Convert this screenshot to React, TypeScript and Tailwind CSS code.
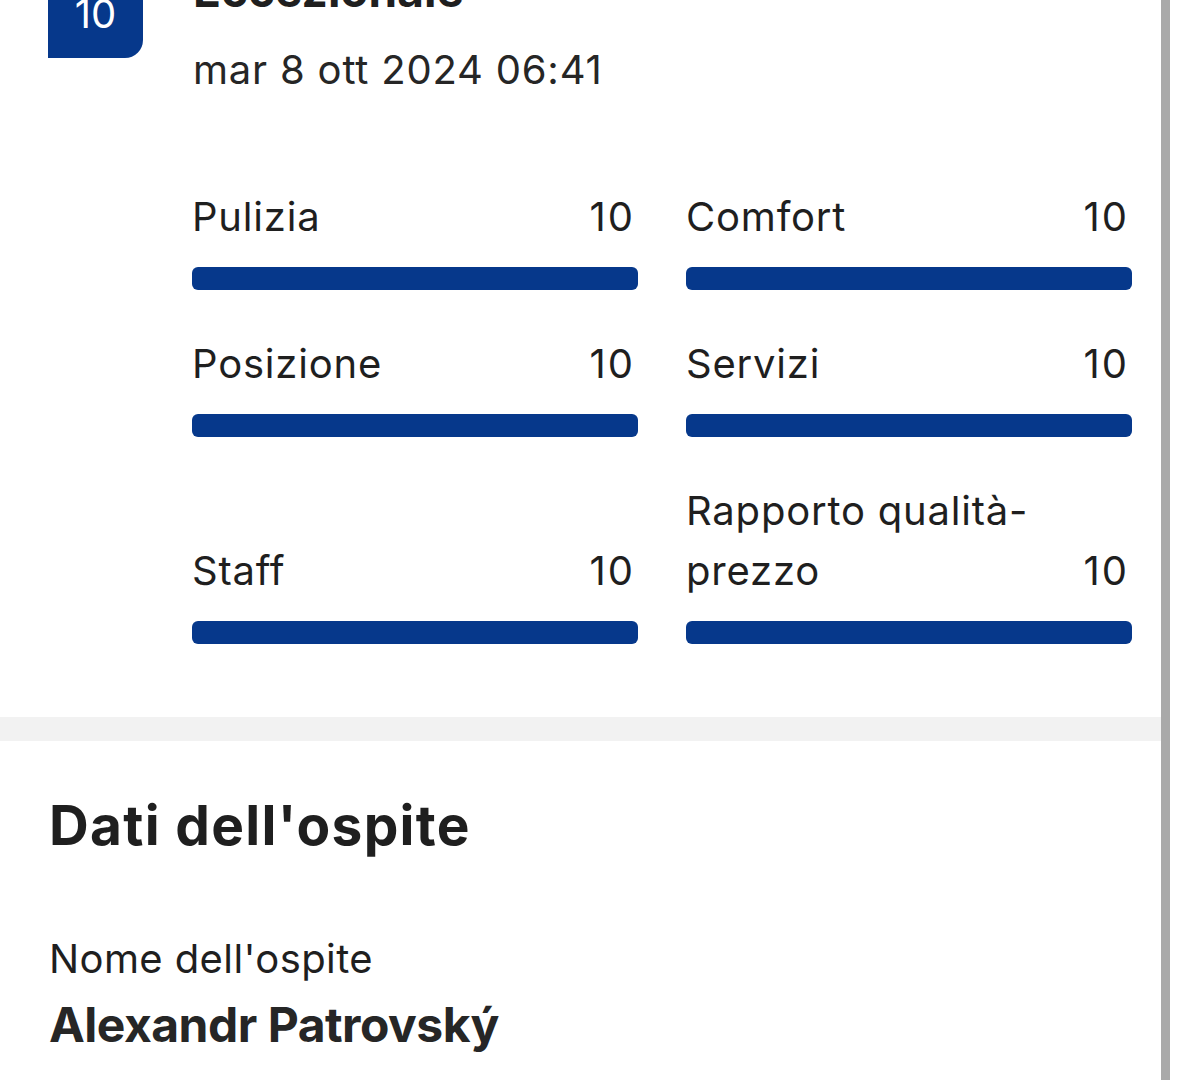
import React from "react";

const scores: { label: string; value: string }[] = [
  { label: "Pulizia", value: "10" },
  { label: "Comfort", value: "10" },
  { label: "Posizione", value: "10" },
  { label: "Servizi", value: "10" },
  { label: "Staff", value: "10" },
  { label: "Rapporto qualità-prezzo", value: "10" },
];

function ScoreItem({ label, value }: { label: string; value: string }) {
  return (
    <div className="flex flex-col justify-end">
      <div className="flex items-end justify-between gap-4 text-[40px] leading-[60px] tracking-[0.8px] text-[#1f1f1f]">
        <span className="min-w-0">{label}</span>
        <span className="shrink-0 mr-[3px] tracking-[2px]">{value}</span>
      </div>
      <div className="mt-[20px] h-[23px] w-full rounded-[6px] bg-[#06388b]" />
    </div>
  );
}

export default function App() {
  return (
    <div
      className="flex h-[1080px] w-[1179px] overflow-hidden bg-white [font-variant-ligatures:none]"
      style={{ fontFamily: "Inter, 'Noto Sans', 'Liberation Sans', sans-serif" }}
    >
      <div className="flex min-w-0 flex-1 flex-col">
        {/* Review header */}
        <div className="-mt-[40px] flex items-start pl-[48px]">
          <div className="mt-[3px] flex h-[95px] w-[95px] shrink-0 items-center justify-center rounded-t-[18px] rounded-br-[18px] bg-[#06388b] pt-[6px] text-[40px] leading-none text-white">
            10
          </div>
          <div className="ml-[50px] flex flex-col">
            <div className="text-[46px] font-bold leading-[60px] text-[#1f1f1f]">Eccezionale</div>
            <div className="mt-[20px] text-[40px] leading-[60px] tracking-[0.8px] text-[#262626]">mar 8 ott 2024 06:41</div>
          </div>
        </div>

        {/* Scores */}
        <div className="mt-[87px] grid grid-cols-2 gap-x-[48px] gap-y-[44px] pl-[192px] pr-[29px]">
          {scores.map((s) => (
            <ScoreItem key={s.label} label={s.label} value={s.value} />
          ))}
        </div>

        {/* Separator band */}
        <div className="mt-[73px] h-[24px] w-full bg-[#f2f2f2]" />

        {/* Guest data */}
        <div className="pl-[49px]">
          <h2 className="mt-[50px] text-[55px] font-bold leading-[69px] tracking-[1.3px] text-[#1f1f1f]">Dati dell'ospite</h2>
          <div className="mt-[69px] text-[40px] leading-[60px] tracking-[0.4px] text-[#1f1f1f]">Nome dell'ospite</div>
          <div className="mt-[6px] text-[48px] font-bold leading-[60px] -tracking-[0.5px] text-[#262626]">Alexandr Patrovský</div>
        </div>
      </div>
      <div className="w-[9px] shrink-0 bg-[#a9a9a9]" />
      <div className="w-[9px] shrink-0 bg-white" />
    </div>
  );
}
